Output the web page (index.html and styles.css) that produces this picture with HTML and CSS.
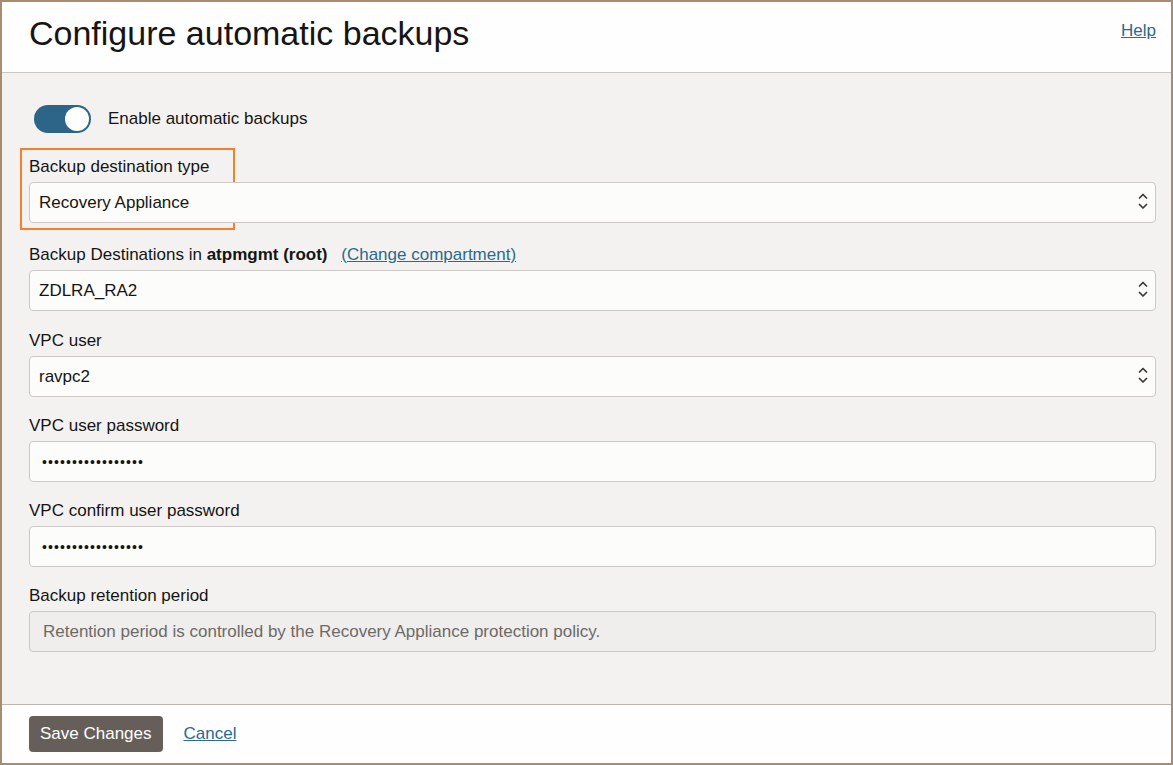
FILE: index.html
```html
<!DOCTYPE html>
<html lang="en">
<head>
    <meta charset="UTF-8">
    <meta name="viewport" content="width=device-width, initial-scale=1.0">
    <title>Configure automatic backups</title>
    <link rel="stylesheet" href="styles.css">
</head>
<body>
    <div class="panel">
        <div class="panel-header">
            <h1>Configure automatic backups</h1>
            <a href="#" class="help-link">Help</a>
        </div>

        <form class="panel-body" id="backupForm">
            <div class="highlight"></div>

            <label class="toggle-row">
                <span class="toggle"><span class="knob"></span></span>
                <span>Enable automatic backups</span>
            </label>

            <div class="field first">
                <label for="destType">Backup destination type</label>
                <div class="select-wrap">
                    <select id="destType">
                        <option>Recovery Appliance</option>
                    </select>
                    <svg class="chevrons" width="12" height="19" viewBox="0 0 12 19">
                        <path d="M2.5 6 L6 2.5 L9.5 6 M2.5 12.5 L6 16 L9.5 12.5" fill="none" stroke="#3a3632" stroke-width="1.7" stroke-linecap="round" stroke-linejoin="round"/>
                    </svg>
                </div>
            </div>

            <div class="field second">
                <label for="dest">Backup Destinations in <b>atpmgmt (root)</b> <a href="#" class="compartment-link">(Change compartment)</a></label>
                <div class="select-wrap">
                    <select id="dest">
                        <option>ZDLRA_RA2</option>
                    </select>
                    <svg class="chevrons" width="12" height="19" viewBox="0 0 12 19">
                        <path d="M2.5 6 L6 2.5 L9.5 6 M2.5 12.5 L6 16 L9.5 12.5" fill="none" stroke="#3a3632" stroke-width="1.7" stroke-linecap="round" stroke-linejoin="round"/>
                    </svg>
                </div>
            </div>

            <div class="field">
                <label for="vpcUser">VPC user</label>
                <div class="select-wrap">
                    <select id="vpcUser">
                        <option>ravpc2</option>
                    </select>
                    <svg class="chevrons" width="12" height="19" viewBox="0 0 12 19">
                        <path d="M2.5 6 L6 2.5 L9.5 6 M2.5 12.5 L6 16 L9.5 12.5" fill="none" stroke="#3a3632" stroke-width="1.7" stroke-linecap="round" stroke-linejoin="round"/>
                    </svg>
                </div>
            </div>

            <div class="field">
                <label for="vpcPass">VPC user password</label>
                <input type="password" id="vpcPass" value="abcdefghijklmnopq">
            </div>

            <div class="field">
                <label for="vpcConfirm">VPC confirm user password</label>
                <input type="password" id="vpcConfirm" value="abcdefghijklmnopq">
            </div>

            <div class="field">
                <label>Backup retention period</label>
                <div class="readonly">Retention period is controlled by the Recovery Appliance protection policy.</div>
            </div>
        </form>

        <div class="panel-footer">
            <button type="submit" form="backupForm">Save Changes</button>
            <a href="#" class="cancel-link">Cancel</a>
        </div>
    </div>
</body>
</html>
```

FILE: styles.css
```css
body {
    font-family: "Liberation Sans", Arial, sans-serif;
    margin: 0;
    padding: 0;
    color: #161513;
}

.panel {
    height: 765px;
    box-sizing: border-box;
    border: 2px solid #a68c70;
    display: flex;
    flex-direction: column;
    background-color: #f3f2f1;
}

.panel-header {
    height: 70px;
    border-bottom: 1px solid #c9c5c1;
    background-color: #fefefe;
    display: flex;
    align-items: center;
    justify-content: space-between;
    padding: 0 15px 0 27px;
}

h1 {
    margin: 0;
    font-size: 34px;
    font-weight: normal;
    color: #161513;
    padding-bottom: 8px;
}

.help-link {
    color: #2a6a8e;
    font-size: 17px;
    padding-bottom: 12px;
}

.panel-body {
    flex: 1;
    position: relative;
    display: flex;
    flex-direction: column;
    padding: 32px 15px 0 27px;
}

.highlight {
    position: absolute;
    left: 18px;
    top: 75px;
    width: 211px;
    height: 78px;
    border: 2px solid #f4802b;
    pointer-events: none;
}

.toggle-row {
    display: flex;
    align-items: center;
    gap: 17px;
    font-size: 17px;
    margin-left: 5px;
    margin-bottom: 24px;
}

.toggle {
    width: 57px;
    height: 28px;
    border-radius: 14px;
    background-color: #2d6588;
    position: relative;
}

.knob {
    position: absolute;
    right: 2px;
    top: 2px;
    width: 24px;
    height: 24px;
    border-radius: 50%;
    background-color: #fff;
}

.field {
    display: flex;
    flex-direction: column;
    margin-bottom: 19px;
}

.field.first {
    margin-bottom: 22px;
}

.field.second {
    margin-bottom: 20px;
}

.field label {
    font-size: 17px;
    line-height: 20px;
    margin-bottom: 5px;
    color: #161513;
}

.field label b {
    margin-right: 9px;
}

.compartment-link {
    color: #2a6a8e;
}

.select-wrap {
    position: relative;
}

select, input[type="password"], .readonly {
    width: 100%;
    height: 41px;
    box-sizing: border-box;
    border: 1px solid #cbc8c5;
    border-radius: 4px;
    background-color: #fcfcfb;
    font-family: inherit;
    font-size: 17px;
    color: #161513;
    margin: 0;
}

select {
    appearance: none;
    -webkit-appearance: none;
    padding: 0 40px 0 9px;
}

.chevrons {
    position: absolute;
    right: 7px;
    top: 10px;
    pointer-events: none;
}

input[type="password"] {
    padding: 0 12px;
    font-size: 14px;
    letter-spacing: 1.1px;
}

.readonly {
    background-color: #efeeed;
    color: #6d6a67;
    padding: 0 13px;
    display: flex;
    align-items: center;
}

.panel-footer {
    height: 58px;
    border-top: 1px solid #bdb6b0;
    background-color: #fefefe;
    display: flex;
    align-items: center;
    gap: 21px;
    padding: 0 27px;
}

button {
    height: 36px;
    padding: 0 11px;
    background-color: #665f59;
    color: #fff;
    border: none;
    border-radius: 4px;
    font-family: inherit;
    font-size: 17px;
    cursor: pointer;
}

.cancel-link {
    color: #2a6a8e;
    font-size: 17px;
}
```
